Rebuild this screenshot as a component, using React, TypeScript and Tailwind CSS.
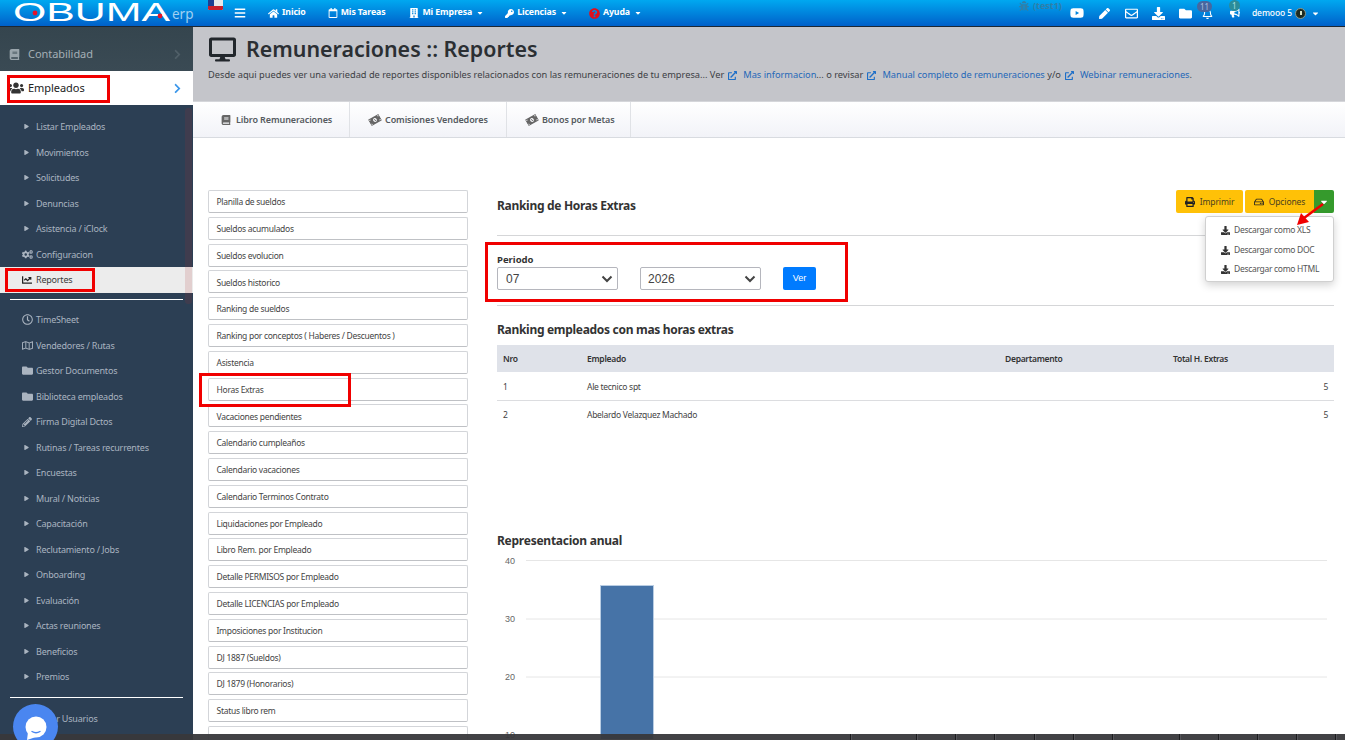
import React from "react";
import {
  FaBars, FaHome, FaRegCalendar, FaBuilding, FaKey, FaQuestionCircle, FaCaretDown, FaBug, FaYoutube, FaPen, FaRegEnvelope,
  FaDownload, FaFolder, FaRegBell, FaBullhorn, FaDesktop, FaExternalLinkAlt, FaBook, FaUsers, FaChevronRight, FaPlay,
  FaCogs, FaChartLine, FaRegClock, FaRegMap, FaPencilAlt, FaMoneyBillAlt, FaPrint, FaRegHdd,
} from "react-icons/fa";

const font = "font-['Noto_Sans',sans-serif]";

type Item = { label: string; icon?: React.ReactNode; active?: boolean };
const tri = <FaPlay className="ml-[2px] text-[5px]" />;
const group1: Item[] = [
  { label: "Listar Empleados" }, { label: "Movimientos" }, { label: "Solicitudes" }, { label: "Denuncias" }, { label: "Asistencia / iClock" },
  { label: "Configuracion", icon: <FaCogs className="text-[11px]" /> },
  { label: "Reportes", icon: <FaChartLine className="text-[10px] text-[#222]" />, active: true },
];
const group2: Item[] = [
  { label: "TimeSheet", icon: <FaRegClock className="text-[11px]" /> },
  { label: "Vendedores / Rutas", icon: <FaRegMap className="text-[11px]" /> },
  { label: "Gestor Documentos", icon: <FaFolder className="text-[11px]" /> },
  { label: "Biblioteca empleados", icon: <FaFolder className="text-[11px]" /> },
  { label: "Firma Digital Dctos", icon: <FaPencilAlt className="text-[10px]" /> },
  { label: "Rutinas / Tareas recurrentes" }, { label: "Encuestas" }, { label: "Mural / Noticias" }, { label: "Capacitación" },
  { label: "Reclutamiento / Jobs" }, { label: "Onboarding" }, { label: "Evaluación" }, { label: "Actas reuniones" }, { label: "Beneficios" }, { label: "Premios" },
];
const reports = [
  "Planilla de sueldos", "Sueldos acumulados", "Sueldos evolucion", "Sueldos historico", "Ranking de sueldos",
  "Ranking por conceptos ( Haberes / Descuentos )", "Asistencia", "Horas Extras", "Vacaciones pendientes", "Calendario cumpleaños",
  "Calendario vacaciones", "Calendario Terminos Contrato", "Liquidaciones por Empleado", "Libro Rem. por Empleado",
  "Detalle PERMISOS por Empleado", "Detalle LICENCIAS por Empleado", "Imposiciones por Institucion", "DJ 1887 (Sueldos)",
  "DJ 1879 (Honorarios)", "Status libro rem", "",
];
const ticks = [850, 916, 955, 994, 1034, 1073, 1112, 1179, 1218, 1257, 1296, 1335];

function SideRow({ item }: { item: Item }) {
  return (
    <div className={`flex h-[25.5px] items-center pl-[22px] text-[9px] tracking-[-0.2px] ${item.active ? "bg-[#ececec] text-[#3a3a3a]" : "text-[#aab4c0]"}`}>
      <span className="flex w-[14px] shrink-0 items-center">{item.icon ?? tri}</span>
      <span>{item.label}</span>
    </div>
  );
}

function NavLink({ icon, label, caret, cls }: { icon: React.ReactNode; label: string; caret?: boolean; cls: string }) {
  return (
    <div className={`flex items-center gap-[3px] text-[8.75px] font-bold tracking-[-0.1px] text-white ${cls}`}>
      {icon}
      <span>{label}</span>
      {caret && <FaCaretDown className="ml-[1px] text-[8px]" />}
    </div>
  );
}

function Ext() {
  return <FaExternalLinkAlt className="mx-[4px] inline text-[9px] text-[#1e6fc8]" />;
}

export default function App() {
  return (
    <div className={`${font} relative h-[740px] w-[1345px] overflow-hidden bg-white text-[#333]`}>
      {/* Top bar */}
      <header className="flex h-[27px] items-center border-b border-[#1c2733] bg-gradient-to-b from-[#00a8f0] to-[#0060c9]">
        <div className="w-[208px] shrink-0">
          <svg width="196" height="24" viewBox="0 0 196 24" className="block">
            <text x="13" y="20" textLength="157" lengthAdjust="spacingAndGlyphs" fontFamily="Liberation Sans, sans-serif" fontSize="26" fill="#fff">OBUMA</text>
            <circle cx="35" cy="12" r="2.4" fill="#e3122a" />
            <circle cx="160" cy="15" r="2.4" fill="#e3122a" />
            <text x="172" y="18" fontFamily="Noto Sans, sans-serif" fontSize="13.5" fill="#9fd0f2">erp</text>
          </svg>
        </div>
        <div className="mb-auto h-[10px] w-[15px] shrink-0 overflow-hidden rounded-b-[1px] bg-white">
          <div className="flex h-[6px]"><div className="w-[6px] bg-[#1c3f94]" /><div className="flex-1 bg-[#e8e8ea]" /></div>
          <div className="h-[4px] bg-[#c9202c]" />
        </div>
        <FaBars className="ml-[11px] text-[12px] text-white" />
        <NavLink cls="ml-[22px]" icon={<FaHome className="text-[11px]" />} label="Inicio" />
        <NavLink cls="ml-[22px]" icon={<FaRegCalendar className="text-[10px]" />} label="Mis Tareas" />
        <NavLink cls="ml-[24px]" icon={<FaBuilding className="text-[10px]" />} label="Mi Empresa" caret />
        <NavLink cls="ml-[21px]" icon={<FaKey className="text-[9px]" />} label="Licencias" caret />
        <NavLink cls="ml-[21px]" icon={<FaQuestionCircle className="text-[11px] text-[#e00e1c]" />} label="Ayuda" caret />
        <div className="ml-auto mr-[25px] flex items-center text-white">
          <div className="mb-[15px] flex items-center gap-[4px] text-[9px] font-bold leading-[11px] text-[#2f7fa8]"><FaBug className="text-[10px]" /><span>(test1)</span></div>
          <FaYoutube className="ml-[8px] text-[14px]" />
          <FaPen className="ml-[15px] text-[11px]" />
          <FaRegEnvelope className="ml-[15px] text-[13px]" />
          <FaDownload className="ml-[14px] text-[13px]" />
          <FaFolder className="ml-[14px] text-[13px]" />
          <div className="relative ml-[10px]">
            <FaRegBell className="text-[11px]" />
            <span className="absolute -left-[5px] -top-[7px] rounded-full bg-[#47679f] px-[3px] text-[8px] leading-[11px] text-[#a9c1e0]">11</span>
          </div>
          <div className="relative ml-[17px]">
            <FaBullhorn className="text-[10px]" />
            <span className="absolute -left-[1px] -top-[8px] rounded-full bg-[#2a8c9a] px-[3px] text-[8px] leading-[11px] text-[#a9e0e0]">1</span>
          </div>
          <span className="ml-[12px] text-[8.5px] font-medium tracking-[-0.1px]">demooo 5</span>
          <span className="ml-[3px] flex h-[11px] w-[11px] items-center justify-center rounded-full border border-[#8a9a8a] bg-[#1c2a22]"><span className="h-[4px] w-[2px] bg-[#d9e4c9]" /></span>
          <FaCaretDown className="ml-[5px] text-[9px]" />
        </div>
      </header>

      <div className="flex">
        {/* Sidebar */}
        <aside className="relative h-[713px] w-[193px] shrink-0 bg-[#2c3f54]">
          <div className="flex h-[44px] items-center bg-gradient-to-b from-[#35454e] to-[#3a4a54] pl-[9px] pr-[10px] pt-[10px] text-[11px] tracking-[-0.05px] text-[#a4afb6]">
            <FaBook className="mr-[8px] text-[11px] text-[#9aa5ac]" />
            <span>Contabilidad</span>
            <FaChevronRight className="ml-auto text-[11px] text-[#505f68]" />
          </div>
          <div className="flex h-[34px] items-center bg-white pl-[8px] pr-[10px] text-[11px] tracking-[-0.05px] text-[#222]">
            <FaUsers className="mr-[4px] text-[16px] text-[#333]" />
            <span>Empleados</span>
            <FaChevronRight className="ml-auto text-[11px] text-[#3a96ea]" />
          </div>
          <div className="pt-[9px]">
            {group1.map((i) => <SideRow key={i.label} item={i} />)}
          </div>
          <div className="mx-[10px] mt-[6.5px] mb-[6.5px] h-px bg-white" />
          <div className="mt-[7px]">
            {group2.map((i) => <SideRow key={i.label} item={i} />)}
          </div>
          <div className="mx-[10px] mt-[7px] h-px bg-white" />
          <div className="mt-[8px] flex h-[25.5px] items-center pl-[36px] text-[9px] tracking-[-0.2px] text-[#aab4c0]">Editar Usuarios</div>
          <div className="absolute left-[185px] top-[81px] h-[196px] w-[7px] rounded-[3px] bg-[#b03030]/15" />
        </aside>

        {/* Main */}
        <main className="min-w-0 flex-1">
          <section className="h-[75px] border-b border-[#d5d6da] bg-[#c4c5ca] pl-[16px] pt-[6px]">
            <div className="flex h-[32px] items-center">
              <FaDesktop className="text-[27px] text-[#22272c]" />
              <h1 className="ml-[10px] text-[21.4px] font-semibold leading-none text-[#2b2f33]">Remuneraciones :: Reportes</h1>
            </div>
            <p className="mt-[2.5px] -ml-[1px] text-[9.25px] leading-[14px] text-[#3c4044]">
              Desde aqui puedes ver una variedad de reportes disponibles relacionados con las remuneraciones de tu empresa... Ver
              <Ext /><span className="ml-[2px] text-[#2468b8]">Mas informacion</span>... o revisar
              <Ext /><span className="ml-[2px] text-[#2468b8]">Manual completo de remuneraciones</span> y/o
              <Ext /><span className="ml-[2px] text-[#2468b8]">Webinar remuneraciones</span>.
            </p>
          </section>

          <nav className="flex h-[36px] border-b border-[#d8dbe0] bg-gradient-to-b from-white to-[#f2f3f8] text-[9px] font-semibold tracking-[-0.1px] text-[#555a60]">
            <div className="flex w-[157px] items-center border-r border-[#e0e2e6] pl-[28px]"><FaBook className="mr-[5px] text-[10px] text-[#666]" />Libro Remuneraciones</div>
            <div className="flex w-[157px] items-center border-r border-[#e0e2e6] pl-[19px]"><FaMoneyBillAlt className="mr-[4px] -rotate-30 text-[12px] text-[#666]" />Comisiones Vendedores</div>
            <div className="flex w-[124px] items-center border-r border-[#e0e2e6] pl-[19px]"><FaMoneyBillAlt className="mr-[4px] -rotate-30 text-[12px] text-[#666]" />Bonos por Metas</div>
          </nav>

          <div className="flex pl-[15px] pr-[11px] pt-[52px]">
            {/* Reports list */}
            <div className="flex w-[260px] shrink-0 flex-col gap-[3.8px]">
              {reports.map((r, idx) => (
                <div key={idx} className="flex h-[23px] shrink-0 items-center rounded-[2px] border border-[#d3d5d9] border-b-[#bfc1c5] bg-white pl-[7.5px] pt-[2px] text-[8.5px] tracking-[-0.28px] text-[#444]">{r}</div>
              ))}
            </div>

            {/* Right panel */}
            <div className="ml-[29px] min-w-0 flex-1">
              <div className="flex h-[46px] items-start justify-between border-b border-[#d5d6d8]">
                <h2 className="mt-[7px] text-[12px] font-bold leading-[17px] tracking-[-0.3px] text-[#333]">Ranking de Horas Extras</h2>
                <div className="flex text-[8.5px] tracking-[-0.1px] text-[#4a4020]">
                  <button className="mr-[2px] flex h-[23px] w-[67px] items-center justify-center gap-[5px] rounded-[2px] bg-[#ffc107] pt-[1px]"><FaPrint className="text-[10px] text-[#222]" />Imprimir</button>
                  <button className="flex h-[23px] w-[69px] items-center justify-center gap-[5px] rounded-l-[2px] bg-[#ffc107] pt-[1px]"><FaRegHdd className="text-[10px] text-[#222]" />Opciones</button>
                  <button className="flex h-[23px] w-[20px] items-center justify-center rounded-r-[2px] bg-[#359a2c] text-white"><FaCaretDown className="text-[10px]" /></button>
                </div>
              </div>

              <div className="flex h-[70px] flex-col border-b border-[#d5d6d8] pt-[17px]">
                <label className="text-[9.5px] font-bold leading-[14px] text-[#333]">Periodo</label>
                <div className="flex">
                  <div className="flex h-[23px] w-[121px] items-center justify-between rounded-[2px] border border-[#b5b6bd] bg-white pl-[8px] pr-[4px] font-['Liberation_Sans',sans-serif] text-[12px] text-[#444]">07<Chevron /></div>
                  <div className="ml-[22px] flex h-[23px] w-[121px] items-center justify-between rounded-[2px] border border-[#b5b6bd] bg-white pl-[7px] pr-[4px] font-['Liberation_Sans',sans-serif] text-[12px] text-[#444]">2026<Chevron /></div>
                  <button className="ml-[22px] h-[23px] w-[33px] rounded-[2px] bg-[#007bff] font-['Liberation_Sans',sans-serif] text-[9px] text-white">Ver</button>
                </div>
              </div>

              <h3 className="mt-[15px] text-[12px] font-bold leading-[17px] tracking-[-0.3px] text-[#333]">Ranking empleados con mas horas extras</h3>
              <table className="mt-[7px] w-full table-fixed border-collapse text-[8.5px] tracking-[-0.28px] text-[#444]">
                <thead>
                  <tr className="h-[27px] bg-[#dfe2e9] text-left font-semibold text-[#333]">
                    <th className="w-[90px] pl-[6px] pt-[2px] font-semibold">Nro</th>
                    <th className="w-[418px] pt-[2px] font-semibold">Empleado</th>
                    <th className="w-[168px] pt-[2px] font-semibold">Departamento</th>
                    <th className="pt-[2px] font-semibold">Total H. Extras</th>
                  </tr>
                </thead>
                <tbody>
                  <tr className="h-[28px] border-b border-[#dcdde0]"><td className="pl-[6px] pt-[3px]">1</td><td className="pt-[3px]">Ale tecnico spt</td><td /><td className="pr-[6px] pt-[3px] text-right">5</td></tr>
                  <tr className="h-[28px]"><td className="pl-[6px] pt-[3px]">2</td><td className="pt-[3px]">Abelardo Velazquez Machado</td><td /><td className="pr-[6px] pt-[3px] text-right">5</td></tr>
                </tbody>
              </table>

              <h3 className="mt-[104px] text-[12px] font-bold leading-[17px] tracking-[-0.25px] text-[#333]">Representacion anual</h3>
              <svg width="837" height="190" viewBox="0 0 837 190" className="block">
                {[{ y: 11.5, t: "40" }, { y: 70, t: "30" }, { y: 128, t: "20" }, { y: 186, t: "10" }].map((g) => (
                  <g key={g.t}>
                    <line x1="29" x2="830" y1={g.y} y2={g.y} stroke="#e6e6e6" strokeWidth="1" />
                    <text x="8" y={g.y + 3} fontSize="9" fontFamily="Liberation Sans, sans-serif" fill="#666">{g.t}</text>
                  </g>
                ))}
                <rect x="103.5" y="36.5" width="53" height="160" fill="#4673a7" stroke="#b9cde3" strokeWidth="1" />
              </svg>
            </div>
          </div>
        </main>
      </div>

      {/* Overlays */}
      <div className="absolute left-[1205px] top-[216px] z-10 h-[66px] w-[129px] rounded-[3px] border border-[#d0d0d0] bg-white pt-[4px] text-[8.5px] tracking-[-0.3px] text-[#555] shadow-[0_3px_8px_rgba(0,0,0,0.18)]">
        {["XLS", "DOC", "HTML"].map((t) => (
          <div key={t} className="flex h-[19.5px] items-center pl-[15px]"><FaDownload className="mr-[4px] text-[9px] text-[#333]" />Descargar como {t}</div>
        ))}
      </div>
      <svg className="absolute left-[1290px] top-[200px] z-20" width="40" height="30" viewBox="0 0 40 30">
        <line x1="33" y1="4" x2="14" y2="18" stroke="#f00000" strokeWidth="2.5" />
        <polygon points="7,25 11,13 19,22" fill="#f00000" />
      </svg>
      <div className="absolute left-[7px] top-[75px] z-10 h-[28px] w-[103px] border-[3px] border-[#f00000]" />
      <div className="absolute left-[5px] top-[268px] z-10 h-[24px] w-[90px] border-[3px] border-[#f00000]" />
      <div className="absolute left-[199px] top-[373px] z-10 h-[34px] w-[152px] border-[3px] border-[#f00000]" />
      <div className="absolute left-[485px] top-[242px] z-10 h-[60px] w-[363px] border-[3px] border-[#f00000]" />

      <div className="absolute left-[13px] top-[704px] z-30 h-[45px] w-[45px] rounded-full bg-[#4a86f0]">
        <svg width="45" height="45" viewBox="0 0 45 45">
          <circle cx="23" cy="23" r="10.5" fill="#fff" />
          <path d="M15 28 L14 36 L23 33 Z" fill="#fff" />
          <path d="M19 27.5 Q23 30 27 27.5" fill="none" stroke="#4a86f0" strokeWidth="1.4" strokeLinecap="round" />
        </svg>
      </div>
      <div className="absolute bottom-0 left-0 right-0 z-20 h-[6px] bg-[#38383b]/95">
        {ticks.map((x) => <div key={x} className="absolute top-0 h-[6px] w-[2px] border-r border-[#55555a] bg-[#1c1c1e]" style={{ left: x }} />)}
      </div>
    </div>
  );
}

function Chevron() {
  return (
    <svg width="12" height="8" viewBox="0 0 12 8"><path d="M1.5 1.5 L6 6 L10.5 1.5" fill="none" stroke="#444" strokeWidth="2" /></svg>
  );
}
